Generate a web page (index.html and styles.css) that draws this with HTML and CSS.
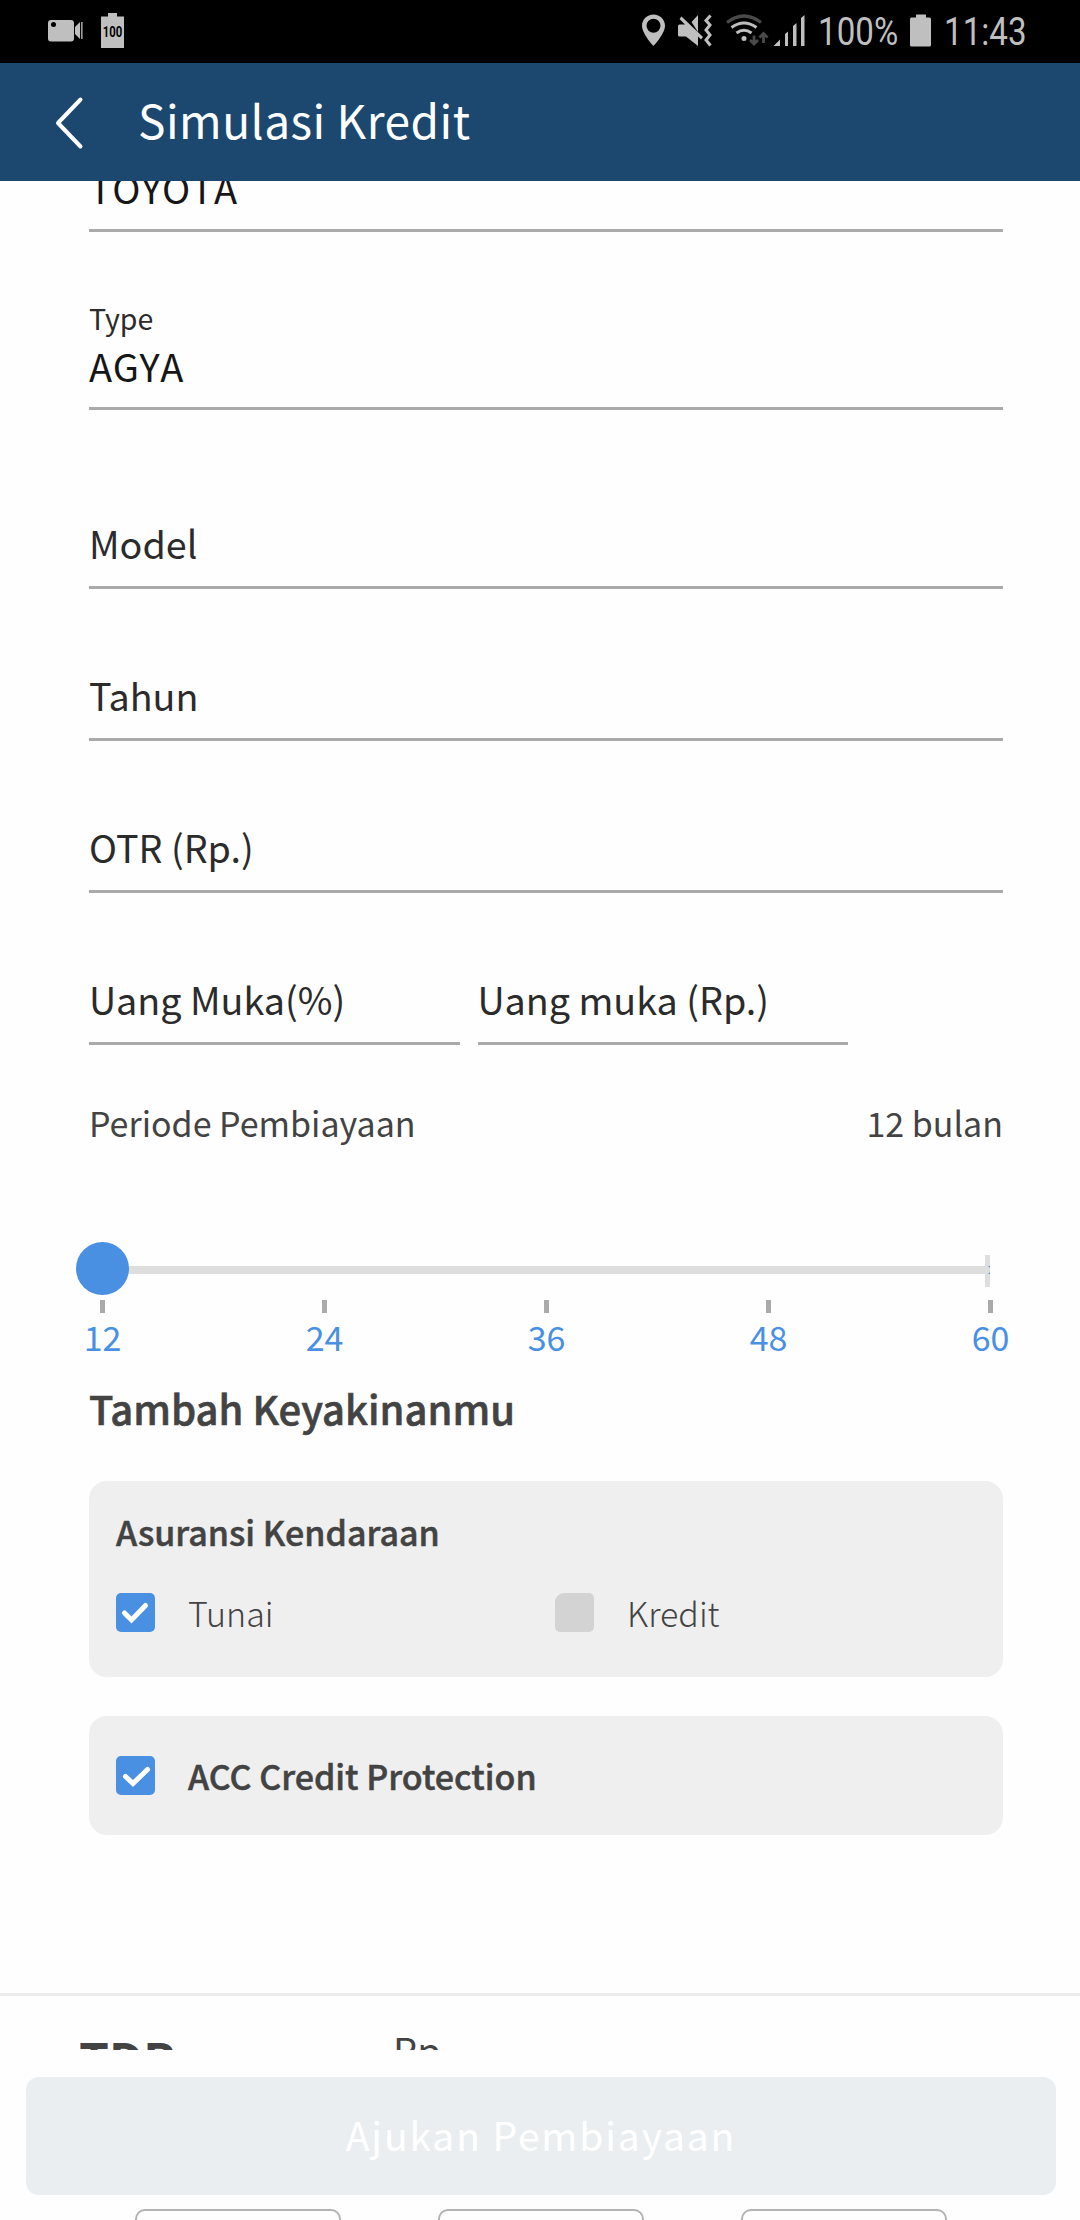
FILE: index.html
```html
<!DOCTYPE html>
<html lang="id">
<head>
<meta charset="utf-8">
<title>Simulasi Kredit</title>
<link rel="stylesheet" href="styles.css">
</head>
<body>
<div class="screen">
  <div class="statusbar">
    <svg class="status-icons" width="100" height="63" viewBox="40 0 100 63">
      <rect x="48" y="20" width="26" height="21.500" rx="3" fill="#bfbfbf"/>
      <circle cx="53.500" cy="24.500" r="2.500" fill="#000"/>
      <path d="M75 27l5-5v17l-5-5z" fill="#bfbfbf"/>
      <path d="M81.800 22v17" stroke="#999" stroke-width="1.700"/>
      <path d="M101 16.500h7V13h9v3.500h7V48h-23z" fill="#bfbfbf"/>
      <text x="102.800" y="37.300" class="mini" textLength="19.500" lengthAdjust="spacingAndGlyphs">100</text>
    </svg>
    <svg class="status-icons" width="180" height="63" viewBox="636 0 180 63">
      <g fill="#bfbfbf">
        <path fill-rule="evenodd" d="M653.500 14.500c-6.500 0-11.500 5-11.500 11.300C642 34 653.500 46 653.500 46S665 34 665 25.800c0-6.300-5-11.300-11.500-11.300zm0 4.300a7 7 0 1 1 0 14 7 7 0 0 1 0-14z"/>
        <path d="M678 26q0-1.500 1.500-1.500h5.500l-5.500-5.500 2-2.500 21.500 20.500-2 2.500-3-3V46l-12-9.500h-6.500q-1.500 0-1.500-1.500zM698 15v17l-6.500-10z"/>
      </g>
      <path d="M710.500 15.500l-4.500 5 4 4.500-4 5 4 5-4 5 4.500 5.500" fill="none" stroke="#bfbfbf" stroke-width="3"/>
      <path d="M727 22.500q17-13 34 0" fill="none" stroke="#4a4a4a" stroke-width="3.200"/>
      <path d="M731.500 27.500q12.500-9 25 0M736.500 33q7.500-5.500 15 0" fill="none" stroke="#bfbfbf" stroke-width="3"/>
      <circle cx="744" cy="38.500" r="2.500" fill="#bfbfbf"/>
      <path d="M754 35.500v8M750 40l4 4 4-4M763.500 43v-8.500M759.500 37.500l4-4 4 4" fill="none" stroke="#4a4a4a" stroke-width="2.800"/>
      <path d="M773.500 46l6.500-6.500V46zM785 34l3-2.500V46h-3zM793 26l3.500-3V46H793zM801 18l3.500-3V46H801z" fill="#bfbfbf"/>
    </svg>
    <span class="sys pct"><span class="sys-t">100%</span></span>
    <svg class="status-icons battery" width="24" height="63" viewBox="908 0 24 63"><path d="M910 19q0-1.500 1.500-1.500h4.500V15q0-.5.500-.5h9q.5 0 .5.5v2.500h3.500q1.500 0 1.500 1.500v26q0 1.500-1.500 1.500h-18q-1.500 0-1.500-1.500z" fill="#bfbfbf"/></svg>
    <span class="sys clock"><span class="sys-t">11:43</span></span>
  </div>
  <header class="appbar">
    <svg width="34" height="60" viewBox="0 0 34 60"><path d="M28.500 7.500L6 31l22.500 23.500" fill="none" stroke="#fff" stroke-width="4" stroke-linecap="round" stroke-linejoin="round"/></svg>
    <h1 class="title">Simulasi Kredit</h1>
  </header>
  <main class="content">
    <section class="form">
      <div class="field filled first"><div class="value">TOYOTA</div></div>
      <div class="field filled"><div class="label">Type</div><div class="value">AGYA</div></div>
      <div class="field model">Model</div>
      <div class="field">Tahun</div>
      <div class="field">OTR (Rp.)</div>
      <div class="field-pair">
        <div class="field">Uang Muka(%)</div>
        <div class="field">Uang muka (Rp.)</div>
      </div>
      <div class="period"><span>Periode Pembiayaan</span><span>12 bulan</span></div>
      <div class="slider"><div class="stop"></div><div class="fill-end"></div><div class="track"></div><div class="knob"></div></div>
      <div class="scale">
        <div class="tick">12</div>
        <div class="tick">24</div>
        <div class="tick">36</div>
        <div class="tick">48</div>
        <div class="tick">60</div>
      </div>
      <h2 class="section-title">Tambah Keyakinanmu</h2>
      <div class="card insurance">
        <h3 class="card-title">Asuransi Kendaraan</h3>
        <div class="options">
          <div class="option"><svg class="box" viewBox="0 0 39 39"><rect width="39" height="39" rx="5" fill="#4990e2"/><path d="M8.500 20l7 7 14-14.500" fill="none" stroke="#fff" stroke-width="5" stroke-linecap="round"/></svg><span>Tunai</span></div>
          <div class="option"><span class="box empty"></span><span>Kredit</span></div>
        </div>
      </div>
      <div class="card protection">
        <svg class="box" viewBox="0 0 39 39"><rect width="39" height="39" rx="5" fill="#4990e2"/><path d="M9.500 20.500l7.500 7 14.500-14" fill="none" stroke="#fff" stroke-width="5" stroke-linecap="round"/></svg><span>ACC Credit Protection</span>
      </div>
    </section>
    <section class="summary"><strong>TDP</strong><span class="amount">Rp.</span></section>
  </main>
  <footer class="footer">
    <button class="submit">Ajukan Pembiayaan</button>
    <div class="peek"><span></span><span></span><span></span></div>
  </footer>
</div>
</body>
</html>
```
FILE: styles.css
```css
* { box-sizing: border-box; margin: 0; padding: 0; }
body { width: 1080px; font-family: "Noto Sans CJK SC", "Noto Sans", sans-serif; color: #434343; background: #fefefe; }
.screen { width: 1080px; height: 2220px; overflow: hidden; display: flex; flex-direction: column; }

.statusbar { height: 63px; flex: none; background: #000; display: flex; align-items: center; padding-left: 40px; }
.status-icons { flex: none; display: block; }
.status-icons + .status-icons { margin-left: 496px; }
.mini { font: 700 14px Roboto, sans-serif; fill: #000; }
.sys { font: 400 39px/46px Roboto, sans-serif; color: #bfbfbf; white-space: nowrap; height: 46px; }
.sys-t { display: inline-block; transform: scaleX(.85); transform-origin: 0 50%; }
.pct { width: 92px; padding-left: 2px; }
.clock { padding-left: 12px; }

.appbar { height: 118px; flex: none; background: #1c486f; display: flex; align-items: center; padding-left: 52px; }
.title { font-size: 46px; font-weight: 400; line-height: 68px; color: #fff; margin: 0 0 6px 52px; letter-spacing: .5px; }

.content { height: 1869px; flex: none; overflow: hidden; }
.form { padding: 0 77px 0 89px; }
.field { margin-top: 77px; padding-bottom: 14px; border-bottom: 3px solid #aaa; font-size: 37.700px; line-height: 58px; color: #2b2b2b; white-space: nowrap; }
.field.filled { margin-top: 65px; padding-bottom: 13px; }
.field.first { margin-top: -21px; }
.field.model { margin-top: 104px; }
.label { font-size: 28.500px; line-height: 41px; }
.value { font-size: 38px; line-height: 56px; color: #161616; font-kerning: none; letter-spacing: .6px; }
.field-pair { display: flex; gap: 18px; width: 759px; }
.field-pair .field { flex: 1; }
.period { display: flex; justify-content: space-between; margin-top: 53px; font-size: 34px; line-height: 50px; }

.slider { position: relative; height: 53px; margin-top: 94px; }
.track { position: absolute; left: 14px; right: 13px; top: 24px; height: 8px; background: #dedede; border-radius: 0 3px 3px 0; }
.fill-end { position: absolute; right: 13px; top: 24px; width: 3px; height: 8px; background: #4990e2; }
.stop { position: absolute; right: 13px; top: 13px; width: 5px; height: 32px; background: #dedede; }
.knob { position: absolute; left: -13px; top: 0; width: 53px; height: 53px; border-radius: 50%; background: #4990e2; }
.scale { display: flex; justify-content: space-between; margin: 5px -7px 0 -6px; }
.tick { width: 39px; display: flex; flex-direction: column; align-items: center; font-size: 34px; line-height: 48px; color: #4990e2; }
.tick::before { content: ""; width: 5px; height: 13px; background: #aaa; }

.section-title { margin-top: 18px; font-size: 40px; line-height: 58px; font-weight: 500; -webkit-text-stroke: .6px; }
.card { background: #efefef; border-radius: 18px; padding: 0 27px; font-size: 34px; line-height: 50px; }
.insurance { height: 196px; margin-top: 44px; padding-top: 26px; }
.card-title { font-size: 34px; font-weight: 500; -webkit-text-stroke: .5px; }
.options { display: grid; grid-template: 39px / 439px 1fr; margin-top: 36px; font-weight: 300; }
.option { display: flex; align-items: center; gap: 33px; }
.box { width: 39px; height: 39px; flex: none; display: block; }
.empty { background: #d3d3d3; border-radius: 9px 5px 5px 5px; }
.protection { height: 119px; margin-top: 39px; display: flex; align-items: center; gap: 33px; font-weight: 500; -webkit-text-stroke: .5px; }

.summary { margin-top: 158px; border-top: 3px solid #ececec; height: 120px; display: flex; align-items: flex-start; padding: 22px 0 0 79px; }
.summary strong { width: 314px; font-size: 48px; font-weight: 700; line-height: 80px; }
.amount { font-size: 38px; line-height: 60px; margin-top: 2px; }

.footer { flex: 1; padding: 27px 24px 0 26px; background: #fefefe; }
.submit { display: block; width: 100%; height: 118px; padding-bottom: 4px; border: 0; border-radius: 13px; background: #eaeef1; color: #fff; font: 400 39px/56px "Noto Sans CJK SC", sans-serif; letter-spacing: 1.850px; }
.peek { display: flex; gap: 97px; margin: 14px 0 0 109px; }
.peek span { width: 206px; height: 60px; border: 2px solid #b3b3b3; border-radius: 10px; flex: none; }
```
